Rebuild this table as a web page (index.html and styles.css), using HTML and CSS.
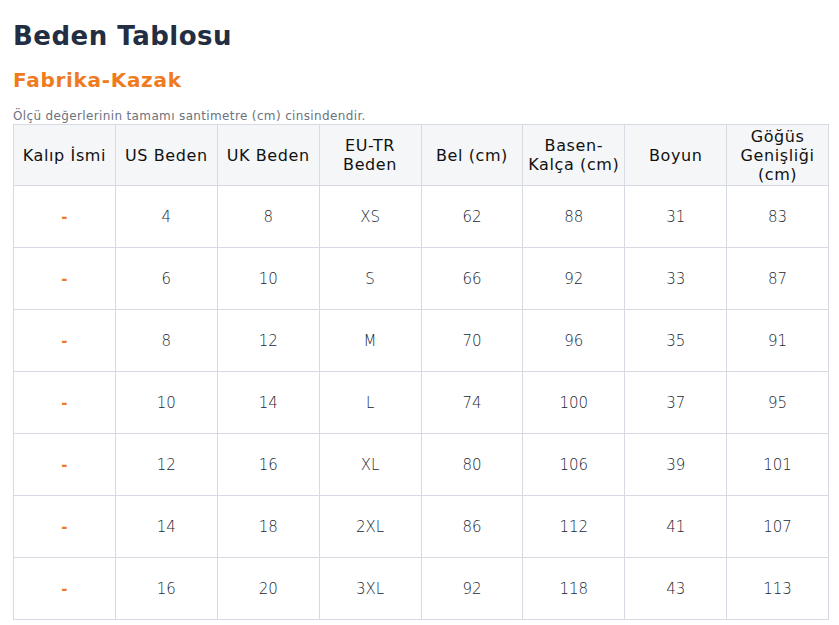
FILE: index.html
```html
<!DOCTYPE html>
<html lang="tr">
<head>
<meta charset="utf-8">
<title>Beden Tablosu</title>
<link rel="stylesheet" href="styles.css">
</head>
<body>
<div class="page">
  <h1 class="title">Beden Tablosu</h1>
  <h2 class="subtitle">Fabrika-Kazak</h2>
  <p class="note">Ölçü değerlerinin tamamı santimetre (cm) cinsindendir.</p>
  <table class="size-table">
    <thead>
      <tr>
        <th>Kalıp İsmi</th>
        <th>US Beden</th>
        <th>UK Beden</th>
        <th>EU-TR<br>Beden</th>
        <th>Bel (cm)</th>
        <th>Basen-<br>Kalça (cm)</th>
        <th>Boyun</th>
        <th>Göğüs<br>Genişliği<br>(cm)</th>
      </tr>
    </thead>
    <tbody>
      <tr><td class="dash">-</td><td>4</td><td>8</td><td>XS</td><td>62</td><td>88</td><td>31</td><td>83</td></tr>
      <tr><td class="dash">-</td><td>6</td><td>10</td><td>S</td><td>66</td><td>92</td><td>33</td><td>87</td></tr>
      <tr><td class="dash">-</td><td>8</td><td>12</td><td>M</td><td>70</td><td>96</td><td>35</td><td>91</td></tr>
      <tr><td class="dash">-</td><td>10</td><td>14</td><td>L</td><td>74</td><td>100</td><td>37</td><td>95</td></tr>
      <tr><td class="dash">-</td><td>12</td><td>16</td><td>XL</td><td>80</td><td>106</td><td>39</td><td>101</td></tr>
      <tr><td class="dash">-</td><td>14</td><td>18</td><td>2XL</td><td>86</td><td>112</td><td>41</td><td>107</td></tr>
      <tr><td class="dash">-</td><td>16</td><td>20</td><td>3XL</td><td>92</td><td>118</td><td>43</td><td>113</td></tr>
    </tbody>
  </table>
</div>
</body>
</html>
```
FILE: styles.css
```css
html, body {
  margin: 0;
  padding: 0;
  background: #ffffff;
}
body {
  font-family: "DejaVu Sans", sans-serif;
}
.page {
  padding: 18px 10px 0 13px;
}
.title {
  margin: 0;
  font-size: 26px;
  line-height: 36px;
  letter-spacing: 0.5px;
  font-weight: bold;
  color: #232e42;
}
.subtitle {
  margin: 11px 0 0;
  font-size: 20px;
  line-height: 30px;
  letter-spacing: 0.7px;
  font-weight: bold;
  color: #f07b1e;
}
.note {
  margin: 14px 0 0;
  font-size: 12px;
  line-height: 15px;
  letter-spacing: 0.36px;
  color: #6b7280;
}
.size-table {
  border-collapse: collapse;
  width: 816px;
  table-layout: fixed;
}
.size-table th,
.size-table td {
  border: 1px solid #d7dae3;
  text-align: center;
  padding: 0 2px;
}
.size-table th {
  background: #f5f6f8;
  color: #111111;
  font-size: 16px;
  line-height: 19px;
  letter-spacing: 0.6px;
  font-weight: normal;
  height: 60px;
}
.size-table td {
  height: 61px;
  font-size: 15px;
  font-weight: 200;
  color: #222733;
}
.size-table td.dash {
  color: #f07b1e;
  font-weight: bold;
}
```
